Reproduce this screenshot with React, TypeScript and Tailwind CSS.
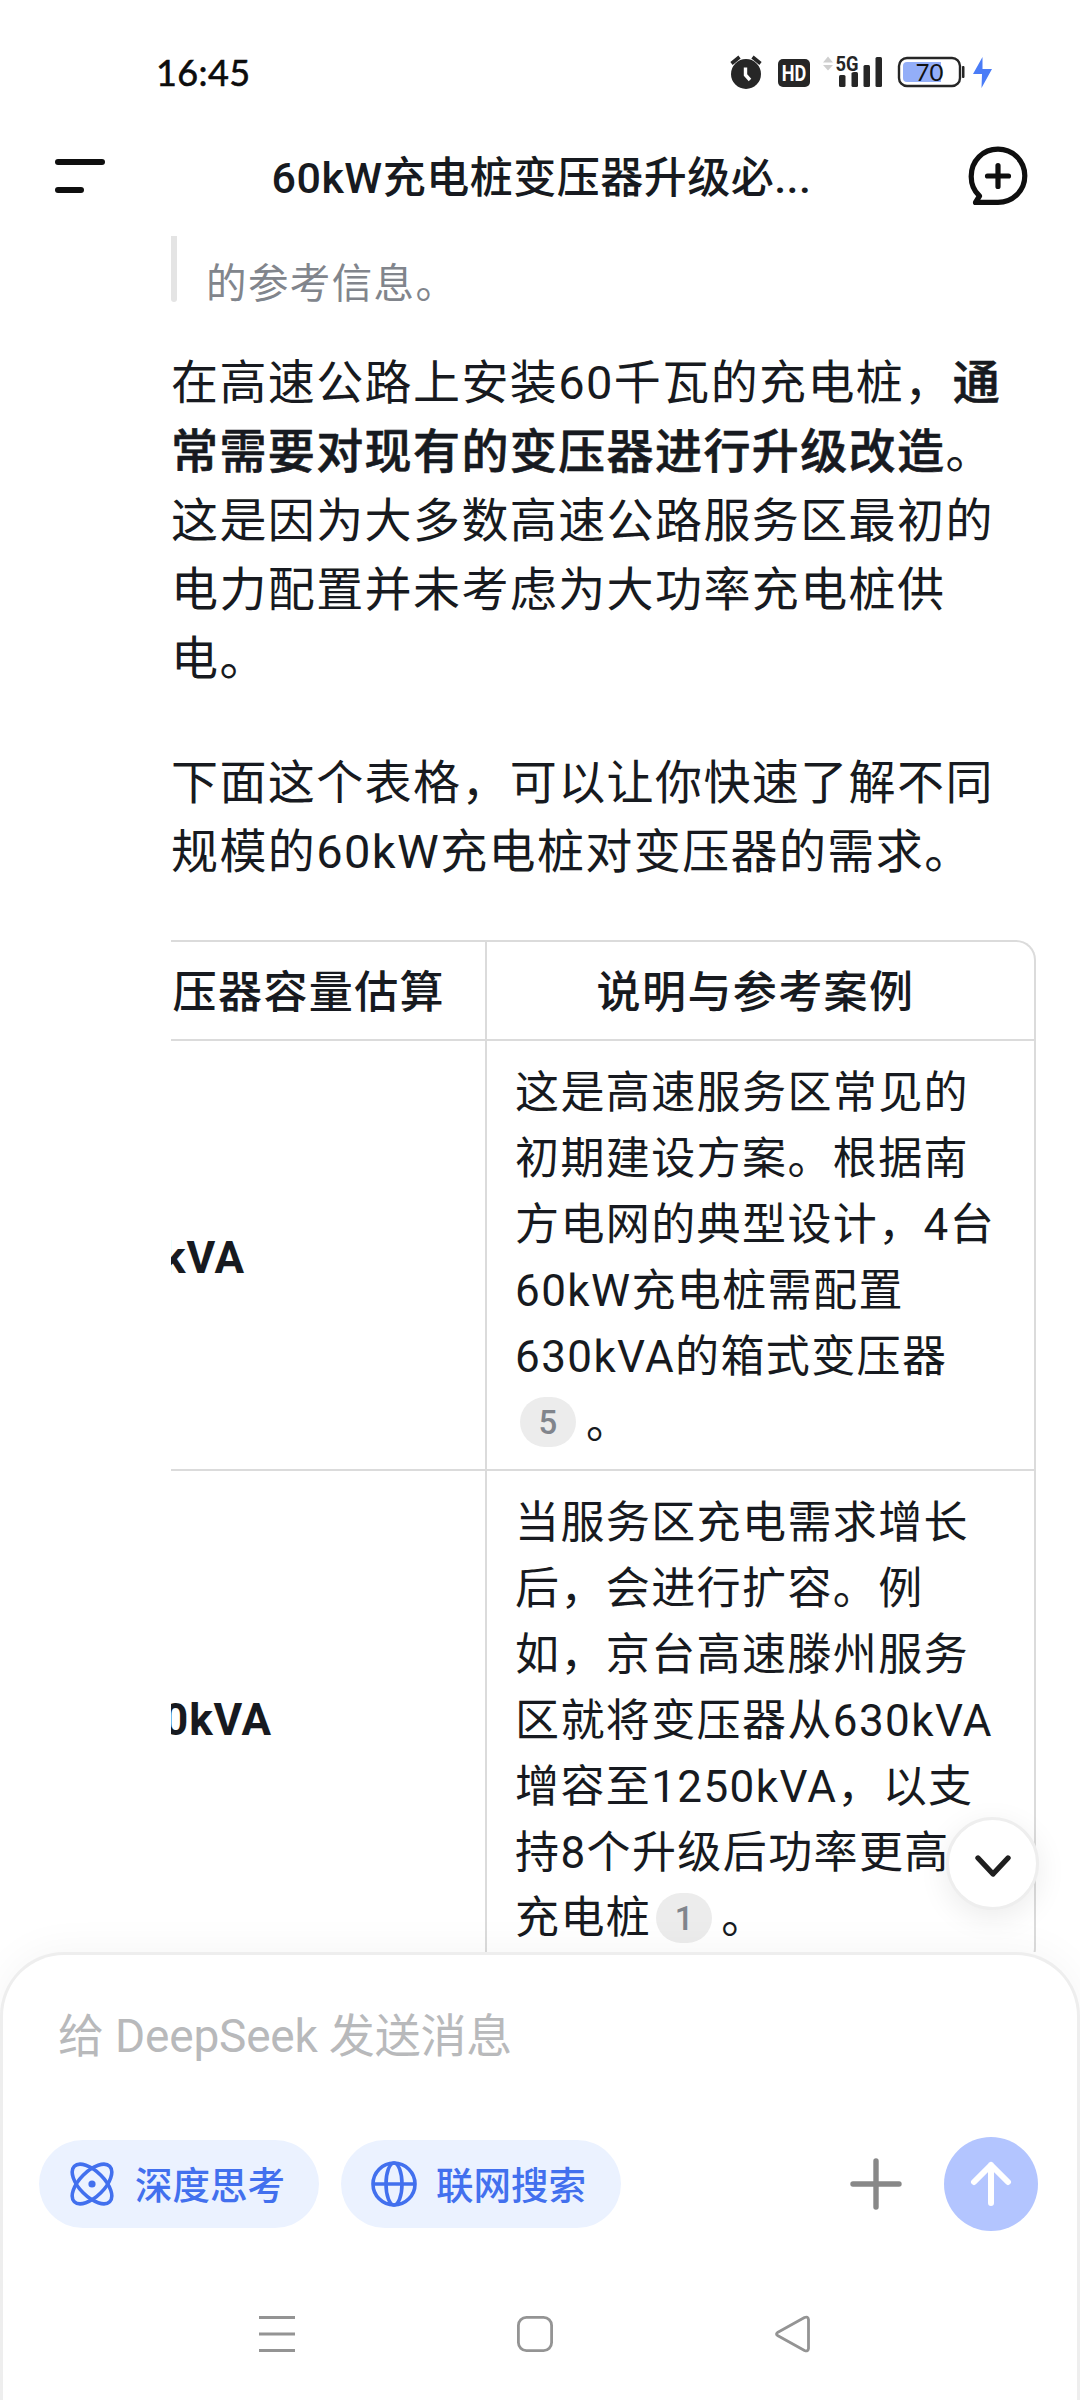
import React from 'react';

const ROW_ONE = [
  '这是高速服务区常见的',
  '初期建设方案。根据南',
  '方电网的典型设计，4台',
  '60kW充电桩需配置',
  '630kVA的箱式变压器',
];

const ROW_TWO = [
  '当服务区充电需求增长',
  '后，会进行扩容。例',
  '如，京台高速滕州服务',
  '区就将变压器从630kVA',
  '增容至1250kVA，以支',
  '持8个升级后功率更高',
];

function Lines({ lines }: { lines: string[] }) {
  return (
    <>
      {lines.map((line) => (
        <div key={line}>{line}</div>
      ))}
    </>
  );
}

function Cite({ n, className }: { n: number; className: string }) {
  return (
    <span
      className={`flex h-[50px] w-[56px] items-center justify-center rounded-full bg-[#ececec] text-[33px] leading-none font-medium tracking-normal text-[#81858c] ${className}`}
    >
      {n}
    </span>
  );
}

function Strong({ children }: { children: React.ReactNode }) {
  return <strong className="font-medium [-webkit-text-stroke:0.6px_#171a20]">{children}</strong>;
}

function StatusBar() {
  return (
    <div className="flex h-[120px] items-center pt-[24px] pr-[86px] pl-[156px]">
      <span className="font-[Lato,sans-serif] text-[36px] leading-none tracking-[0.400px] text-[#0c0c0c] [-webkit-text-stroke:0.6px_#0c0c0c]">16:45</span>
      <svg className="ml-auto" width="266" height="40" viewBox="728 52 266 40">
        <g fill="#262626">
          <circle cx="746" cy="74" r="15" />
          <path d="M731.5 63.5l8-6.5M760.500 63.500l-8-6.500" stroke="#262626" strokeWidth="3.600" />
          <path d="M745.500 67.500v7.500l4.500 5" fill="none" stroke="#fff" strokeWidth="3.400" />
          <rect x="778" y="59" width="32" height="28" rx="5" />
          <rect x="839" y="75" width="6.500" height="12" rx="1.500" />
          <rect x="851.500" y="72" width="6.500" height="15" rx="1.500" />
          <rect x="863.500" y="65" width="6.500" height="22" rx="1.500" />
          <rect x="875.500" y="57" width="6.500" height="30" rx="1.500" />
          <path d="M962.500 66.500h1.500v11h-1.500z" stroke="#262626" />
        </g>
        <path d="M823 62.500l5-6 5 6zM823 65l5 5.500 5-5.500z" fill="#cfcfcf" />
        <text x="794" y="80.500" textAnchor="middle" fill="#fff" fontSize="21.500" fontWeight="700" fontFamily="Roboto, sans-serif" textLength="24.500" lengthAdjust="spacingAndGlyphs">HD</text>
        <text x="835.500" y="70.500" fill="#262626" stroke="#fff" strokeWidth="2.400" paintOrder="stroke" fontSize="21" fontWeight="700" fontFamily="Roboto, sans-serif" textLength="23" lengthAdjust="spacingAndGlyphs">5G</text>
        <rect x="899" y="58" width="61" height="28" rx="8" fill="#fff" stroke="#262626" strokeWidth="2.400" />
        <path d="M907 62h34v20h-34a4 4 0 0 1-4-4v-12a4 4 0 0 1 4-4z" fill="#93aef8" />
        <text x="929.500" y="80.800" textAnchor="middle" fill="#111" fontSize="24" fontFamily="Lato, sans-serif">70</text>
        <path d="M982.500 57l-9.500 17h9l-.5 14 10.500-19h-9.500z" fill="#4a7cf7" />
      </svg>
    </div>
  );
}

function Header() {
  return (
    <div className="flex h-[116px] items-center justify-between pr-[52px] pl-[55px]">
      <div className="flex w-[60px] flex-col gap-[22px] pb-[4px]">
        <span className="h-[6px] w-[50px] rounded-full bg-[#0f0f0f]" />
        <span className="h-[6px] w-[29px] rounded-full bg-[#0f0f0f]" />
      </div>
      <h1 className="text-[43px] leading-[60px] font-medium whitespace-nowrap tracking-[0.5px] text-[#171a20]">60kW充电桩变压器升级必...</h1>
      <svg className="mb-[4px]" width="60" height="60" viewBox="0 0 60 60" fill="none" stroke="#0f0f0f" strokeWidth="5.200" strokeLinecap="round" strokeLinejoin="round">
        <path d="M30 56.400H7.500l4-6.400C6.500 45.500 3.200 38.500 3.200 30.500 3.200 14.500 15 3.200 30 3.200S56.800 15 56.800 29.800 45 56.400 30 56.400z" />
        <path d="M30 19.500v21M19.500 30h21" />
      </svg>
    </div>
  );
}

function DataTable() {
  return (
    <div className="mt-[54px] mr-[44px] grid grid-cols-[316px_1fr] overflow-hidden rounded-r-[20px] border-y-2 border-r-2 border-[#dbdbdb] text-[44px] leading-[65.9px] tracking-[1.4px]">
      <div className="flex h-[99px] items-center justify-end border-r-2 border-b-2 border-[#dbdbdb] pt-[7px] pr-[40px] font-medium">压器容量估算</div>
      <div className="flex items-center justify-center border-b-2 border-[#dbdbdb] pt-[7px] pr-[10px] font-medium">说明与参考案例</div>
      <div className="flex h-[430px] items-center border-r-2 border-b-2 border-[#dbdbdb] pt-[7px] font-bold">
        <span className="-ml-[9px] tracking-[0.9px]">kVA</span>
      </div>
      <div className="border-b-2 border-[#dbdbdb] pt-[20px] pl-[28px] whitespace-nowrap">
        <Lines lines={ROW_ONE} />
        <div className="flex items-center">
          <Cite n={5} className="-mt-[2px] ml-[5px]" />
          <span className="ml-[10px]">。</span>
        </div>
      </div>
      <div className="flex h-[495px] items-center border-r-2 border-[#dbdbdb] pt-[5px] font-bold">
        <span className="-ml-[8px] tracking-[0.9px]">0kVA</span>
      </div>
      <div className="pt-[20px] pl-[28px] whitespace-nowrap">
        <Lines lines={ROW_TWO} />
        <div className="flex items-center">
          <span>充电桩</span>
          <Cite n={1} className="-mt-[2px] ml-[5px]" />
          <span className="ml-[9px]">。</span>
        </div>
      </div>
    </div>
  );
}

function Composer() {
  return (
    <div className="relative flex h-[448px] flex-col rounded-t-[64px] border-x-[3px] border-t-[3px] border-[#eeeeee] bg-white shadow-[0_-4px_40px_rgba(0,0,0,0.04)]">
      <div className="mt-[49px] ml-[55px] text-[46px] leading-[64px] whitespace-nowrap text-[#b8b9bb] tracking-[-0.2px]">给 DeepSeek 发送消息</div>
      <div className="mt-[69px] flex items-center pr-[39px] pl-[36px]">
        <button className="flex h-[88px] w-[280px] items-center rounded-full bg-[#ebf2ff] pl-[31px] text-[37.500px] font-medium whitespace-nowrap text-[#4270ee]">
          <svg width="44" height="44" viewBox="0 0 44 44" fill="none" stroke="currentColor" strokeWidth="3.600">
            <ellipse cx="22" cy="22" rx="25" ry="12.500" transform="rotate(45 22 22)" />
            <ellipse cx="22" cy="22" rx="25" ry="12.500" transform="rotate(-45 22 22)" />
            <circle cx="22" cy="22" r="3.600" fill="currentColor" stroke="none" />
          </svg>
          <span className="mt-[4px] ml-[21px]">深度思考</span>
        </button>
        <button className="ml-[22px] flex h-[88px] w-[280px] items-center rounded-full bg-[#ebf2ff] pl-[30px] text-[37.500px] font-medium whitespace-nowrap text-[#4270ee]">
          <svg width="46" height="46" viewBox="0 0 46 46" fill="none" stroke="currentColor" strokeWidth="3.600">
            <circle cx="23" cy="23" r="21" />
            <ellipse cx="23" cy="23" rx="8" ry="21" />
            <path d="M2 23h42" />
          </svg>
          <span className="mt-[4px] ml-[19px]">联网搜索</span>
        </button>
        <svg className="ml-auto" width="52" height="52" viewBox="0 0 52 52" stroke="#888" strokeWidth="5.400" strokeLinecap="round">
          <path d="M26 3v46M3 26h46" />
        </svg>
        <div className="ml-[42px] flex h-[94px] w-[94px] items-center justify-center rounded-full bg-[#b3c5ff]">
          <svg width="46" height="46" viewBox="0 0 46 46" fill="none" stroke="#fff" strokeWidth="6" strokeLinecap="round" strokeLinejoin="round">
            <path d="M23 42V4M6 21L23 4l17 17" />
          </svg>
        </div>
      </div>
      <div className="mt-[84px] flex justify-between pr-[265px] pl-[255px]">
        <svg width="38" height="38" viewBox="0 0 38 38" stroke="#949494" strokeWidth="3">
          <path d="M1 2.500h36M1 19h36M1 35.500h36" />
        </svg>
        <svg width="38" height="38" viewBox="0 0 38 38" fill="none" stroke="#949494" strokeWidth="2.800">
          <rect x="2.400" y="2.400" width="33.200" height="33.200" rx="8" />
        </svg>
        <svg width="38" height="38" viewBox="0 0 38 38" fill="none" stroke="#949494" strokeWidth="2.800" strokeLinejoin="round">
          <path d="M3.500 17.500L30.500 2.500Q34 1 34.500 4.500V33.500Q34 37 30.500 35.500L3.500 20.500Q1.500 19 3.500 17.500z" />
        </svg>
      </div>
    </div>
  );
}

export default function App() {
  return (
    <div className="flex h-[2400px] w-[1080px] flex-col overflow-hidden bg-white font-[Roboto,'Noto_Sans_CJK_SC',sans-serif] text-[#171a20]">
      <StatusBar />
      <Header />
      <div className="relative h-[1716px]">
        <main className="ml-[171px] h-full overflow-hidden">
          <div className="flex">
            <span className="h-[66px] w-[6px] rounded-b-full bg-[#e4e4e4]" />
            <span className="mt-[18px] ml-[29px] text-[40.500px] leading-[60px] tracking-[1.400px] text-[#81858c]">的参考信息。</span>
          </div>
          <p className="mt-[34px] text-[47px] leading-[69px] whitespace-nowrap tracking-[1.400px]">
            在高速公路上安装60千瓦的充电桩，<Strong>通</Strong>
            <br />
            <Strong>常需要对现有的变压器进行升级改造</Strong>。
            <br />
            这是因为大多数高速公路服务区最初的
            <br />
            电力配置并未考虑为大功率充电桩供
            <br />
            电。
          </p>
          <p className="mt-[55px] text-[47px] leading-[69px] whitespace-nowrap tracking-[1.400px]">
            下面这个表格，可以让你快速了解不同
            <br />
            规模的60kW充电桩对变压器的需求。
          </p>
          <DataTable />
        </main>
        <button className="absolute right-[41px] bottom-[42px] flex h-[93px] w-[93px] items-center justify-center rounded-full border-[3px] border-[#eeeeee] bg-white shadow-[0_8px_30px_rgba(0,0,0,0.08)]">
          <svg className="mt-[5px]" width="38" height="24" viewBox="0 0 38 24" fill="none" stroke="#1f1f1f" strokeWidth="5.400" strokeLinecap="round" strokeLinejoin="round">
            <path d="M4 4l15 16L34 4" />
          </svg>
        </button>
      </div>
      <Composer />
    </div>
  );
}
